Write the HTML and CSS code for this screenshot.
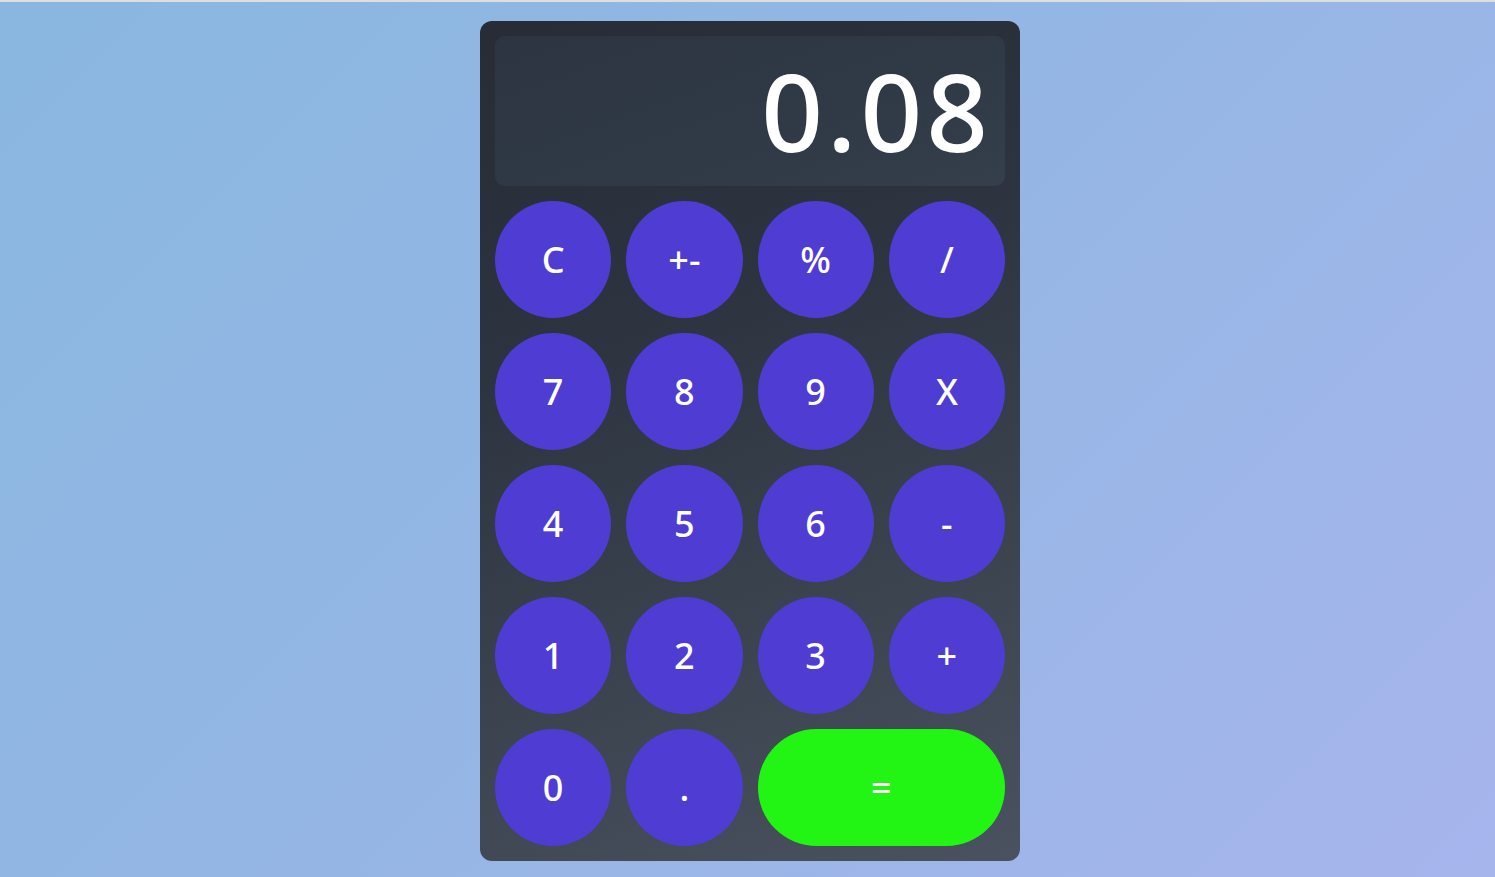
FILE: index.html
```html
<!DOCTYPE html>
<html lang="en">
<head>
<meta charset="utf-8">
<title>Calculator</title>
<link rel="stylesheet" href="styles.css">
</head>
<body>
<div class="page">
  <div class="calculator">
    <div class="display">0.08</div>
    <div class="keys">
      <button class="key">C</button>
      <button class="key">+-</button>
      <button class="key">%</button>
      <button class="key">/</button>
      <button class="key">7</button>
      <button class="key">8</button>
      <button class="key">9</button>
      <button class="key">X</button>
      <button class="key">4</button>
      <button class="key">5</button>
      <button class="key">6</button>
      <button class="key">-</button>
      <button class="key">1</button>
      <button class="key">2</button>
      <button class="key">3</button>
      <button class="key">+</button>
      <button class="key">0</button>
      <button class="key">.</button>
      <button class="key key-equals">=</button>
    </div>
  </div>
</div>
</body>
</html>
```

FILE: styles.css
```css
html, body {
  margin: 0;
  padding: 0;
  height: 100%;
}

body {
  border-top: 2px solid #dedede;
  box-sizing: border-box;
  background: linear-gradient(135deg, #89b7df 0%, #95b6e5 50%, #a7b5ed 100%);
  font-family: "Noto Sans", "DejaVu Sans", sans-serif;
  overflow: hidden;
}

.page {
  display: flex;
  justify-content: center;
  padding-top: 19px;
  padding-left: 5px;
}

.calculator {
  width: 540px;
  height: 840px;
  box-sizing: border-box;
  padding: 15px;
  border-radius: 12px;
  background: linear-gradient(160deg, #272c36 0%, #2d343f 35%, #3b444f 70%, #49525e 100%);
  display: flex;
  flex-direction: column;
  gap: 15px;
}

.display {
  height: 150px;
  box-sizing: border-box;
  border-radius: 10px;
  background: linear-gradient(160deg, #2c3541 0%, #303a46 60%, #353f4b 100%);
  color: #ffffff;
  font-size: 108px;
  font-weight: 500;
  display: flex;
  align-items: center;
  justify-content: flex-end;
  padding: 0 13px 0 16px;
  letter-spacing: 4px;
  line-height: 1;
}

.keys {
  flex: 1;
  display: grid;
  grid-template-columns: repeat(4, 1fr);
  grid-template-rows: repeat(5, 1fr);
  gap: 15px;
}

.key {
  border: none;
  margin: 0;
  padding: 0;
  border-radius: 50%;
  background: #4f3cd2;
  color: #ffffff;
  font-family: "Noto Sans", "DejaVu Sans", sans-serif;
  font-size: 36px;
  font-weight: 500;
  display: flex;
  align-items: center;
  justify-content: center;
  cursor: pointer;
}

.key-equals {
  grid-column: span 2;
  border-radius: 60px;
  background: #22f514;
}
```
